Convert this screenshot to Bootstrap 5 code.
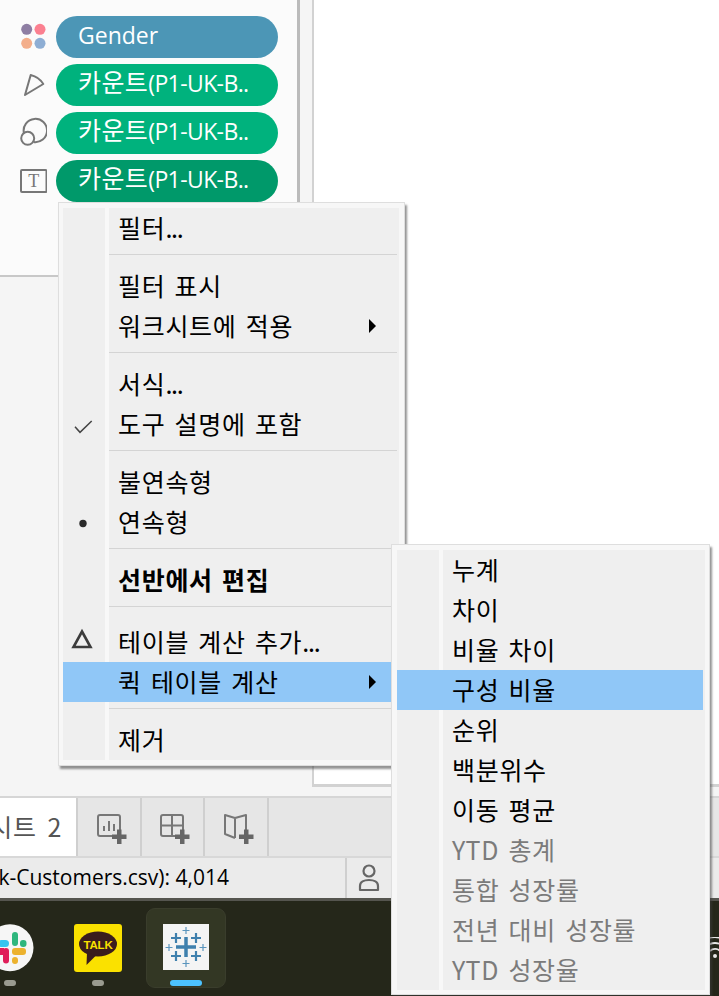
<!doctype html>
<html lang="ko"><head><meta charset="utf-8">
<link rel="stylesheet" href="https://cdn.jsdelivr.net/npm/bootstrap@5.3.0/dist/css/bootstrap.min.css">
<style>
html,body{margin:0;height:996px;overflow:hidden;background:#f5f5f5}
body{font-family:"Noto Sans CJK KR","Noto Sans",sans-serif;font-size:25px;letter-spacing:.7px;word-spacing:1.5px;position:relative;width:719px;color:#000}
.top-area{height:796px}
.left-col{width:312px}
.shelf{height:277px;width:300px;background:#fbfbfb;border-right:3px solid #bbb;border-bottom:2px solid #c8c8c8;padding:16px 19px 0 20px;gap:6px}
.shelf-row{height:42px;gap:9px}
.shelf-ico{width:27px;flex:none}
.pill{flex:1;height:42px;border-radius:21px;color:#fff;padding-left:22px;line-height:38px;font-family:"Open Sans","Noto Sans CJK KR",sans-serif;font-size:23px;letter-spacing:0;white-space:nowrap;overflow:hidden}
.pill-tight{line-height:35px}
.pill-ko{font-family:"Noto Sans CJK KR",sans-serif;font-size:25px;letter-spacing:.4px}
.pill-latin{font-size:23px;letter-spacing:-.6px}
.pill-blue{background:#4c96b6}.pill-green{background:#00b27d}.pill-dark{background:#00996a}
.canvas-box{flex:1;height:787px;background:#fff;border-left:2px solid #d2d2d2;border-bottom:3px solid #d2d2d2}
.tabbar{height:60px;background:#e6e6e6;border-top:2px solid #d6d6d6}
.tab-cell{width:63.500px;border-right:2px solid #cfcfcf;height:58px;padding:3px 0 0 8px}
.tab-on{width:78px;background:#fff;color:#555;overflow:hidden;white-space:nowrap;padding:0 14px 0 0;word-spacing:3px}
.statusbar{height:45px;background:#ebebeb;border-top:2px solid #d8d8d8;border-bottom:3px solid #55554f;font-family:"Open Sans","Noto Sans CJK KR",sans-serif;font-size:21px;letter-spacing:0;word-spacing:0;white-space:nowrap}
.status-count{width:345px;overflow:hidden;padding-right:116px}
.status-user{width:46px;border-left:2px solid #cfcfcf}
.taskbar{height:95px;background:#25271a;position:relative}
.app-tile{position:absolute;top:7px;left:146px;width:80px;height:80px;background:#333724;border:1px solid #3a3d2c;border-radius:9px}
.ind{position:absolute;top:79px;height:6px;border-radius:3px;background:#9a9b90}
.ind-on{background:#4cc2ff}
.menu-box{position:absolute;background:#f7f7f7;border:1px solid #dedede;box-shadow:2px 3px 2px rgba(60,60,60,.55)}
.menu-main{left:58px;top:202px;width:347px;height:564px;padding:5px 5px 5px 4px}
.menu-sub{left:391px;top:544px;width:319px;height:451px;padding:5px 4px 4px 5px}
.menu-panel{position:relative;height:100%;background:linear-gradient(to right,#efefef 42px,#f8f8f8 42px,#f8f8f8 46px,#efefef 46px)}
.menu-row{height:40px;line-height:39px;padding-left:55px;position:relative;white-space:nowrap}
.menu-dots{letter-spacing:-1.300px}
.menu-hi{background:#90c7f7}
.menu-hi-main{margin-right:8px}
.menu-hi-sub{margin-right:2px}
.menu-sep{height:1px;background:#d4d4d4;margin:6px 2px 11px 46px}
.menu-sep-wide{margin-bottom:15px}
.menu-off{color:#7b7b7b}
.menu-arrow{position:absolute;right:23px;top:13px;width:0;height:0;border-left:7px solid #000;border-top:7px solid transparent;border-bottom:7px solid transparent}
.menu-hi-main .menu-arrow{right:15px}
.menu-mark{position:absolute;left:7px;top:0;width:28px;height:40px}
.t-letter{font-family:"Liberation Serif",serif;font-size:18px;letter-spacing:0;fill:#777}
.talk-text{font-family:"Liberation Sans",sans-serif;font-weight:700;font-size:11.500px;letter-spacing:-.2px;fill:#fae100}
</style></head>
<body>
<div class="top-area d-flex">
  <div class="left-col">
    <div class="shelf d-flex flex-column">
      <div class="shelf-row d-flex align-items-center">
        <svg class="shelf-ico" width="27" height="42" viewBox="0 0 27 42"><circle cx="6.700" cy="13.300" r="5.500" fill="#8e7ea3"/><circle cx="20" cy="13.300" r="5.500" fill="#fb8090"/><circle cx="6.700" cy="27.300" r="5.500" fill="#f3ae8b"/><circle cx="20" cy="27.300" r="5.500" fill="#8eaed4"/></svg>
        <div class="pill pill-blue">Gender</div>
      </div>
      <div class="shelf-row d-flex align-items-center">
        <svg class="shelf-ico" width="27" height="42" viewBox="0 0 27 42"><path d="M5 31 L10.700 11 Q19 13 23.300 20 Z" fill="none" stroke="#777" stroke-width="2" stroke-linejoin="round"/></svg>
        <div class="pill pill-tight pill-green"><span class="pill-ko">카운트</span><span class="pill-latin">(P1-UK-B..</span></div>
      </div>
      <div class="shelf-row d-flex align-items-center">
        <svg class="shelf-ico" width="27" height="42" viewBox="0 0 27 42"><path d="M3.900 21 A11.700 11.700 0 1 1 13.500 30.100" fill="none" stroke="#777" stroke-width="2"/><circle cx="7.700" cy="26.300" r="6.500" fill="none" stroke="#777" stroke-width="2"/></svg>
        <div class="pill pill-tight pill-green"><span class="pill-ko">카운트</span><span class="pill-latin">(P1-UK-B..</span></div>
      </div>
      <div class="shelf-row d-flex align-items-center">
        <svg class="shelf-ico" width="27" height="42" viewBox="0 0 27 42"><rect x="1" y="10" width="25.500" height="22" rx="1" fill="none" stroke="#777" stroke-width="2"/><text x="13.800" y="26.700" text-anchor="middle" class="t-letter">T</text></svg>
        <div class="pill pill-tight pill-dark"><span class="pill-ko">카운트</span><span class="pill-latin">(P1-UK-B..</span></div>
      </div>
    </div>
  </div>
  <div class="canvas-box"></div>
</div>
<div class="tabbar d-flex">
  <div class="tab-cell tab-on d-flex align-items-center justify-content-end">시트 2</div>
  <div class="tab-cell d-flex align-items-center justify-content-center">
    <svg width="36" height="36" viewBox="0 0 36 36"><path d="M22 25H5a2 2 0 0 1-2-2V6a2 2 0 0 1 2-2h18a2 2 0 0 1 2 2v16" fill="none" stroke="#777" stroke-width="2"/><path d="M9 20v-5M14 20V10M19 20v-7" stroke="#777" stroke-width="2"/><path d="M22 18.500h4.500v5h5v4.500h-5v5H22v-5h-5v-4.500h5z" fill="#666"/></svg>
  </div>
  <div class="tab-cell d-flex align-items-center justify-content-center">
    <svg width="36" height="36" viewBox="0 0 36 36"><path d="M22 25H5a2 2 0 0 1-2-2V6a2 2 0 0 1 2-2h18a2 2 0 0 1 2 2v16M3 14.500h22M14 4v21" fill="none" stroke="#777" stroke-width="2"/><path d="M22 18.500h4.500v5h5v4.500h-5v5H22v-5h-5v-4.500h5z" fill="#666"/></svg>
  </div>
  <div class="tab-cell d-flex align-items-center justify-content-center">
    <svg width="36" height="36" viewBox="0 0 36 36"><path d="M13 27L3 23V4l10 3 11-3v17M13 7v20" fill="none" stroke="#777" stroke-width="2" stroke-linejoin="round"/><path d="M22 18.500h4.500v5h5v4.500h-5v5H22v-5h-5v-4.500h5z" fill="#666"/></svg>
  </div>
</div>
<div class="statusbar d-flex">
  <div class="status-count d-flex align-items-center justify-content-end">k-Customers.csv): 4,014</div>
  <div class="status-user d-flex align-items-center justify-content-center">
    <svg width="22" height="28" viewBox="0 0 22 28"><circle cx="11" cy="7" r="5.500" fill="none" stroke="#666" stroke-width="2.200"/><path d="M2 26v-4c0-4 4-6 9-6s9 2 9 6v4z" fill="none" stroke="#666" stroke-width="2.200" stroke-linejoin="round"/></svg>
  </div>
</div>
<div class="taskbar">
  <svg class="position-absolute top-0 start-0" width="36" height="72" viewBox="0 0 36 72">
    <circle cx="10" cy="46.700" r="23.500" fill="#f6f6f6"/>
    <rect x="-2" y="39" width="11" height="7" rx="3.500" fill="#36c5f0"/><rect x="12" y="31" width="6" height="14" rx="3" fill="#2eb67d"/><rect x="20" y="39" width="6.500" height="7" rx="3" fill="#2eb67d"/>
    <rect x="12" y="47" width="14" height="7" rx="3" fill="#ecb22e"/><rect x="12" y="56" width="6" height="7" rx="3" fill="#ecb22e"/>
    <rect x="3" y="47" width="6" height="15.500" rx="3" fill="#e01e5a"/><rect x="0" y="47" width="4" height="7" fill="#e01e5a"/>
  </svg>
  <div class="ind" style="left:4px;width:12px"></div>
  <svg class="position-absolute" style="left:74px;top:23px" width="48" height="48" viewBox="0 0 48 48">
    <rect width="48" height="48" rx="3" fill="#fae100"/>
    <ellipse cx="24" cy="20" rx="19" ry="12.500" fill="#3a1d1d"/><path d="M13 28l-.5 13 9-9z" fill="#3a1d1d"/>
    <text x="24" y="24.500" text-anchor="middle" class="talk-text">TALK</text>
  </svg>
  <div class="ind" style="left:92px;width:12px"></div>
  <div class="app-tile"></div>
  <svg class="position-absolute" style="left:163px;top:23px" width="46" height="46" viewBox="0 0 46 46">
    <rect width="46" height="46" fill="#f4f4f4"/>
    <g fill="none" stroke-linecap="butt">
      <path d="M23 13v20M13 23h20" stroke="#3f80ad" stroke-width="3.500"/>
      <path d="M13 9v10M8 14h10M33 9v10M28 14h10M13 27v10M8 32h10M33 27v10M28 32h10" stroke="#3f80ad" stroke-width="2.200"/>
      <path d="M23 3v7M19.500 6.500h7M23 36v7M19.500 39.500h7M6 20v7M2.500 23.500h7M40 20v7M36.500 23.500h7" stroke="#5b95bd" stroke-width="1.200"/>
    </g>
  </svg>
  <div class="ind ind-on" style="left:170px;width:32px"></div>
  <svg class="position-absolute" style="left:700px;top:36px" width="19" height="22" viewBox="0 0 19 22" fill="none" stroke="#e8e8e8" stroke-width="1.800">
    <path d="M1.600 5.600A19 19 0 0 1 28.400 5.600M5.800 9.800A13 13 0 0 1 24.200 9.800M10 14A7 7 0 0 1 20 14"/><circle cx="15" cy="19" r="2" fill="#e8e8e8" stroke="none"/>
  </svg>
</div>

<div class="menu-box menu-main">
  <div class="menu-panel">
    <div class="menu-row">필터<span class="menu-dots">...</span></div>
    <div class="menu-sep"></div>
    <div class="menu-row">필터 표시</div>
    <div class="menu-row">워크시트에 적용<span class="menu-arrow"></span></div>
    <div class="menu-sep"></div>
    <div class="menu-row">서식<span class="menu-dots">...</span></div>
    <div class="menu-row"><svg class="menu-mark" viewBox="0 0 28 40" fill="none"><path d="M5 22.700l5 5.600 11.700-11.300" stroke="#444" stroke-width="1.500"/></svg>도구 설명에 포함</div>
    <div class="menu-sep"></div>
    <div class="menu-row">불연속형</div>
    <div class="menu-row"><svg class="menu-mark" viewBox="0 0 28 40"><circle cx="13" cy="21.500" r="3.700" fill="#2a2a2a"/></svg>연속형</div>
    <div class="menu-sep"></div>
    <div class="menu-row fw-bold">선반에서 편집</div>
    <div class="menu-sep menu-sep-wide"></div>
    <div class="menu-row"><svg class="menu-mark" viewBox="0 0 28 40" fill="none"><path d="M12 9.500L20.500 25H3.500z" stroke="#3c3c3c" stroke-width="2.600"/></svg>테이블 계산 추가<span class="menu-dots">...</span></div>
    <div class="menu-row menu-hi menu-hi-main">퀵 테이블 계산<span class="menu-arrow"></span></div>
    <div class="menu-sep"></div>
    <div class="menu-row">제거</div>
  </div>
</div>
<div class="menu-box menu-sub">
  <div class="menu-panel">
    <div class="menu-row">누계</div>
    <div class="menu-row">차이</div>
    <div class="menu-row">비율 차이</div>
    <div class="menu-row menu-hi menu-hi-sub">구성 비율</div>
    <div class="menu-row">순위</div>
    <div class="menu-row">백분위수</div>
    <div class="menu-row">이동 평균</div>
    <div class="menu-row menu-off">YTD 총계</div>
    <div class="menu-row menu-off">통합 성장률</div>
    <div class="menu-row menu-off">전년 대비 성장률</div>
    <div class="menu-row menu-off">YTD 성장율</div>
  </div>
</div>
</body></html>
